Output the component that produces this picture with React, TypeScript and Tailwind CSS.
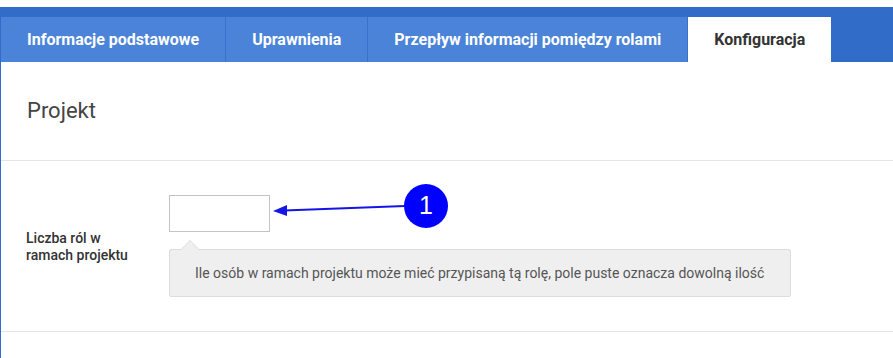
import React from "react";

export default function App() {
  const tabs = [
    { label: "Informacje podstawowe", active: false },
    { label: "Uprawnienia", active: false },
    { label: "Przepływ informacji pomiędzy rolami", active: false },
    { label: "Konfiguracja", active: true },
  ];
  return (
    <div
      className="relative w-[893px] h-[358px] bg-white overflow-hidden"
      style={{ fontFamily: "Roboto, 'Liberation Sans', sans-serif" }}
    >
      <div className="mt-[7px] h-[351px] border-l border-[#306cc8] flex flex-col">
        <div className="h-[55px] bg-[#306cc8] flex items-end pl-0">
          {tabs.map((t, i) => (
            <div
              key={i}
              className={
                t.active
                  ? "h-[45px] px-[26px] flex items-center bg-white text-[#333] text-[16px] font-bold"
                  : "h-[45px] px-[26px] flex items-center bg-[#4a83d8] text-white text-[16px] font-bold border-r border-[#3a72cb]"
              }
            >
              {t.label}
            </div>
          ))}
        </div>
        <div className="h-[99px] border-b border-[#e5e5e5] flex items-center pl-[26px] pb-[2px]">
          <h2 className="text-[22px] text-[#444] font-normal">Projekt</h2>
        </div>
        <div className="h-[171px] border-b border-[#e5e5e5] flex items-center pl-[25px]">
          <div className="w-[143px] text-[14px] font-medium text-[#333] leading-[17px] pt-[2px]">
            Liczba ról w<br />ramach projektu
          </div>
          <div className="flex flex-col">
            <input className="w-[101px] h-[37px] border border-[#c4c4c4] bg-white outline-none" />
            <div className="relative mt-[17px] w-[622px] h-[48px] bg-[#efefef] border border-[#dcdcdc] rounded-[2px] flex items-center pl-[25px] text-[14px] text-[#555]">
              <div className="absolute -top-[10px] left-[10px] w-0 h-0 border-l-[10px] border-r-[10px] border-b-[10px] border-l-transparent border-r-transparent border-b-[#dcdcdc]" />
              <div className="absolute -top-[9px] left-[11px] w-0 h-0 border-l-[9px] border-r-[9px] border-b-[9px] border-l-transparent border-r-transparent border-b-[#efefef]" />
              Ile osób w ramach projektu może mieć przypisaną tą rolę, pole puste oznacza dowolną ilość
            </div>
          </div>
        </div>
      </div>
      <svg className="absolute left-0 top-0 pointer-events-none" width="893" height="358">
        <line x1="405" y1="206" x2="284" y2="210.5" stroke="#1515e6" strokeWidth="2" />
        <polygon points="273,211 287,205 287,216" fill="#1515e6" />
        <circle cx="426" cy="206" r="22" fill="#0000ff" />
      </svg>
      <div className="absolute left-[404px] top-[184px] w-[44px] h-[44px] flex items-center justify-center text-white text-[25px] leading-none pb-[2px]" style={{ fontFamily: "'Liberation Sans', Arial, sans-serif" }}>
        1
      </div>
    </div>
  );
}
